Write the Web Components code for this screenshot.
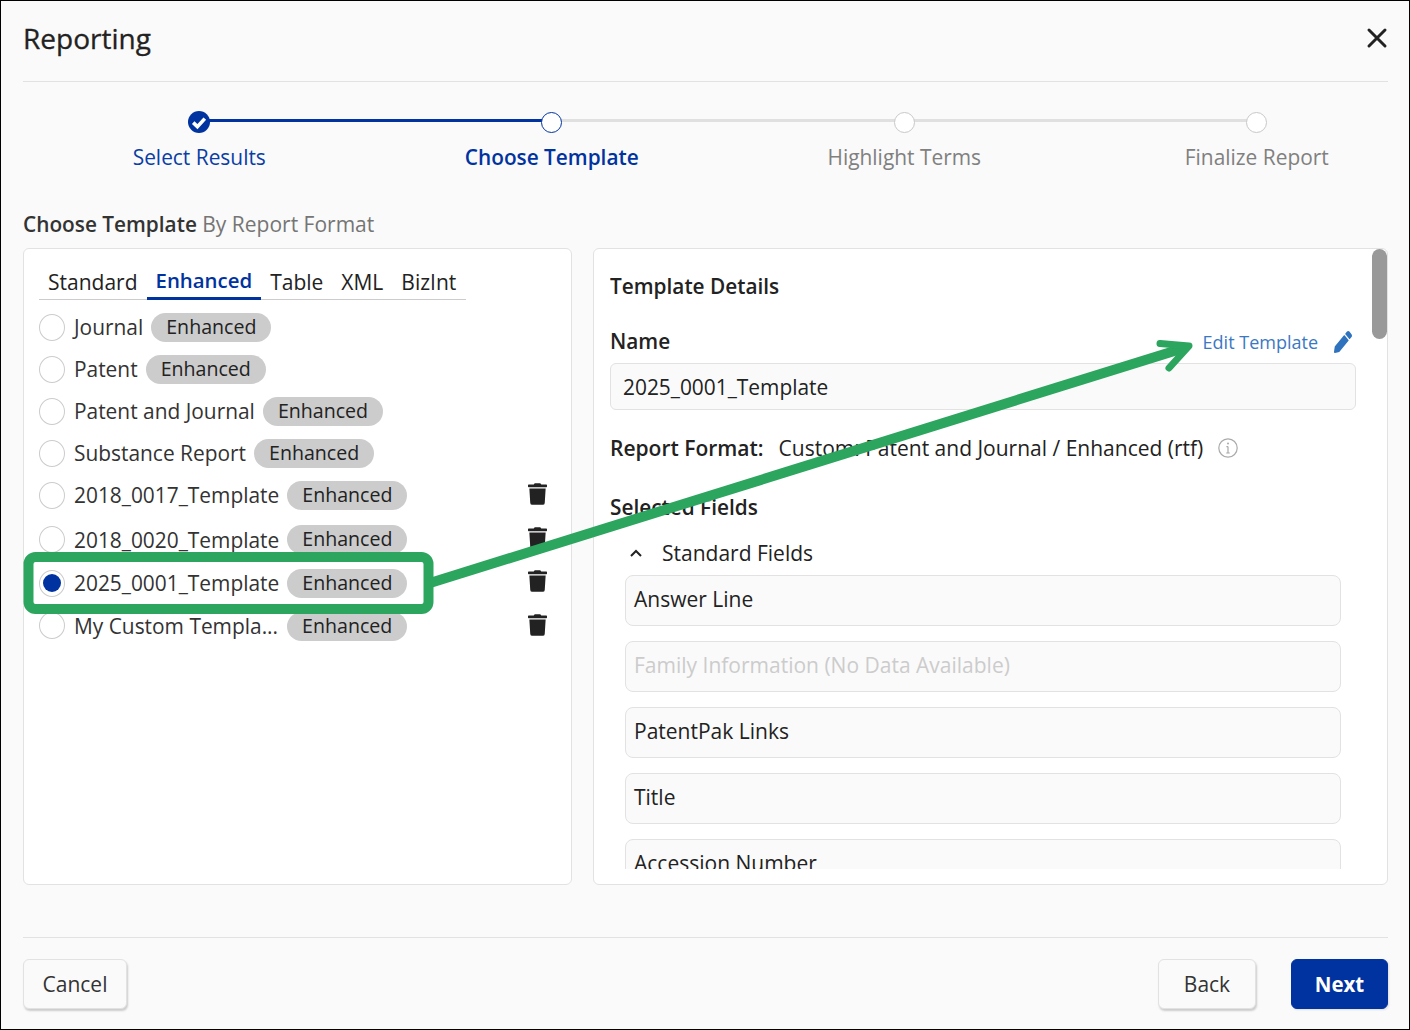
<!DOCTYPE html>
<html>
<head>
<meta charset="utf-8">
<title>Reporting</title>
<style>
  html, body { margin: 0; padding: 0; }
  body { font-family: "Open Sans", sans-serif; color: #222; font-size: 21px; }
</style>
</head>
<body>
<report-dialog>
  <step-bar slot="steps">
    <step-item state="done" label="Select Results"></step-item>
    <step-item state="current" label="Choose Template"></step-item>
    <step-item label="Highlight Terms"></step-item>
    <step-item label="Finalize Report" last></step-item>
  </step-bar>
  <template-panel slot="left">
    <template-row name="Journal"></template-row>
    <template-row name="Patent"></template-row>
    <template-row name="Patent and Journal"></template-row>
    <template-row name="Substance Report"></template-row>
    <template-row name="2018_0017_Template" custom style="height:42px;margin-bottom:1px"></template-row>
    <template-row name="2018_0020_Template" custom style="height:45px"></template-row>
    <template-row name="2025_0001_Template" custom checked style="--ty:-5px"></template-row>
    <template-row name="My Custom Templa..." custom style="height:43px;--ty:-1px;--pill-top:2px;--pill-left:9px"></template-row>
  </template-panel>
  <details-panel slot="right">
    <field-row>Answer Line</field-row>
    <field-row disabled>Family Information (No Data Available)</field-row>
    <field-row>PatentPak Links</field-row>
    <field-row>Title</field-row>
    <field-row>Accession Number</field-row>
  </details-panel>
</report-dialog>

<script>
const TRASH = '<svg viewBox="0 0 448 512" width="19" height="22" fill="#222"><path d="M432 32H312l-9.4-18.7A24 24 0 0 0 281.1 0H166.8a23.72 23.72 0 0 0-21.4 13.3L136 32H16A16 16 0 0 0 0 48v32a16 16 0 0 0 16 16h416a16 16 0 0 0 16-16V48a16 16 0 0 0-16-16zM53.2 467a48 48 0 0 0 47.9 45h245.8a48 48 0 0 0 47.9-45L416 128H32z"/></svg>';
const PENCIL = '<svg viewBox="0 0 512 512" width="18" height="22" preserveAspectRatio="none" fill="#2f72bd"><path d="M497.9 142.1l-46.1 46.1c-4.7 4.7-12.3 4.7-17 0l-111-111c-4.7-4.7-4.7-12.3 0-17l46.1-46.1c18.7-18.7 49.1-18.7 67.9 0l60.1 60.1c18.8 18.7 18.8 49.1 0 67.9zM284.2 99.8L21.6 362.4.4 483.9c-2.9 16.4 11.4 30.6 27.8 27.8l121.5-21.3 262.6-262.6c4.7-4.7 4.7-12.3 0-17l-111-111c-4.8-4.7-12.4-4.7-17.1 0z"/></svg>';

class ReportDialog extends HTMLElement {
  constructor() {
    super();
    this.attachShadow({mode: "open"}).innerHTML = `
      <style>
        * { box-sizing: border-box; }
        :host {
          display: block; position: relative; width: 1410px; height: 1030px; overflow: hidden;
          box-sizing: border-box; border: 1px solid #000; background: #fafafa; padding: 0 21px 0 22px;
        }
        header {
          height: 81px; border-bottom: 1px solid #e2e2e2; display: flex; align-items: center;
          justify-content: space-between; padding-bottom: 6px;
        }
        h1 { margin: 0; font-size: 28px; font-weight: 500; color: #222; -webkit-text-stroke: 0.3px #222; }
        .close { display: flex; }
        .steps { display: block; height: 106px; }
        h2 { margin: 0; height: 60px; padding-top: 22px; font-size: 20.8px; line-height: 28px; font-weight: 600; color: #333; }
        h2 span { font-weight: 400; font-size: 21px; color: #757575; }
        .panels { display: flex; gap: 21px; height: 637px; }
        footer {
          margin-top: 52px; border-top: 1px solid #e2e2e2; padding-top: 21px;
          display: flex; align-items: flex-start;
        }
        .spacer { flex: 1; }
        .back { margin-right: 35px; }
        .overlay { position: absolute; left: -1px; top: -1px; pointer-events: none; }
      </style>
      <header>
        <h1>Reporting</h1>
        <span class="close">
          <svg width="22" height="22" viewBox="0 0 22 22"><path d="M3 3 L19 19 M19 3 L3 19" stroke="#222" stroke-width="3" stroke-linecap="round"/></svg>
        </span>
      </header>
      <div class="steps"><slot name="steps"></slot></div>
      <h2>Choose Template <span>By Report Format</span></h2>
      <div class="panels">
        <slot name="left"></slot>
        <slot name="right"></slot>
      </div>
      <footer>
        <app-button style="width:104px">Cancel</app-button>
        <div class="spacer"></div>
        <app-button class="back" style="width:98px">Back</app-button>
        <app-button primary style="width:97px">Next</app-button>
      </footer>
      <svg class="overlay" width="1410" height="1030" fill="none" stroke="#2ca55e">
        <rect x="28.5" y="557" width="400" height="52" rx="7" stroke-width="10"/>
        <path d="M430 583 L1184 348" stroke-width="10"/>
        <path d="M1160 343.5 L1189 346 L1169 368" stroke-width="7" stroke-linecap="round" stroke-linejoin="round"/>
      </svg>`;
  }
}
customElements.define("report-dialog", ReportDialog);

class StepBar extends HTMLElement {
  constructor() {
    super();
    this.attachShadow({mode: "open"}).innerHTML = `
      <style>
        :host { display: grid; grid-template-columns: repeat(4, 352.5px); padding-top: 29px; }
      </style>
      <slot></slot>`;
  }
}
customElements.define("step-bar", StepBar);

class StepItem extends HTMLElement {
  constructor() {
    super();
    const state = this.getAttribute("state") || "todo";
    const mark = state == "done"
      ? '<svg width="22" height="22" viewBox="0 0 22 22"><circle cx="11" cy="11" r="11" fill="#0033a0"/><path d="M5.2 11.6 L9.4 15.6 L16.8 7.6" fill="none" stroke="#fff" stroke-width="3.6"/></svg>'
      : '<span class="ring"></span>';
    this.attachShadow({mode: "open"}).innerHTML = `
      <style>
        * { box-sizing: border-box; }
        :host { display: block; position: relative; text-align: center; font-size: 20.9px; color: #808080; }
        :host([state="done"]) { color: #0a3ea6; }
        :host([state="current"]) { color: #0033a0; font-weight: 600; font-size: 20.8px; }
        .dot { height: 22px; position: relative; z-index: 1; display: flex; justify-content: center; align-items: center; }
        .ring { width: 21px; height: 21px; border-radius: 50%; background: #fff; border: 1px solid #c8c8c8; }
        :host([state="current"]) .ring { border-color: #0033a0; }
        .line {
          position: absolute; left: 50%; width: 100%; top: 8px; height: 3px; background: #e0e0e0;
        }
        :host([state="done"]) .line { background: #0033a0; }
        :host([last]) .line { display: none; }
        .label { margin-top: 10px; line-height: 28px; }
      </style>
      <div class="line"></div>
      <div class="dot">${mark}</div>
      <div class="label">${this.getAttribute("label")}</div>`;
  }
}
customElements.define("step-item", StepItem);

class TemplatePanel extends HTMLElement {
  constructor() {
    super();
    this.attachShadow({mode: "open"}).innerHTML = `
      <style>
        * { box-sizing: border-box; }
        :host {
          display: block; box-sizing: border-box; width: 549px; height: 637px; background: #fff; border: 1px solid #e2e2e2;
          border-radius: 6px; padding: 15px 15px 0 15px; font-size: 20.9px;
        }
        .tabs { display: flex; width: 427px; height: 36px; border-bottom: 1px solid #ccc; color: #222; font-size: 21px; }
        .tab { padding: 4px 9px 0; line-height: 28px; height: 36px; }
        .tab.on { color: #0033a0; font-weight: 600; font-size: 20.4px; border-bottom: 3px solid #0033a0; padding-top: 2px; }
        .list { margin-top: 6px; }
      </style>
      <div class="tabs">
        <span class="tab">Standard</span>
        <span class="tab on">Enhanced</span>
        <span class="tab">Table</span>
        <span class="tab">XML</span>
        <span class="tab">BizInt</span>
      </div>
      <div class="list"><slot></slot></div>`;
  }
}
customElements.define("template-panel", TemplatePanel);

class TemplateRow extends HTMLElement {
  constructor() {
    super();
    const trash = this.hasAttribute("custom") ? `<span class="trash">${TRASH}</span>` : "";
    this.attachShadow({mode: "open"}).innerHTML = `
      <style>
        * { box-sizing: border-box; }
        :host { display: flex; align-items: center; height: 42px; width: 517px; }
        .radio {
          width: 26px; height: 27px; border-radius: 50%; border: 1px solid #ccc; background: #fff;
          display: flex; align-items: center; justify-content: center; flex: none;
        }
        :host([checked]) .radio::after { content: ""; width: 18px; height: 18px; border-radius: 50%; background: #0033a0; }
        .name { margin-left: 9px; white-space: nowrap; color: #333; }
        .pill {
          margin-left: var(--pill-left, 8px); margin-top: var(--pill-top, 0); height: 29px; line-height: 27px;
          padding: 0 15px; border-radius: 15px; font-size: 19.6px;
          background: #ccc; color: #222; white-space: nowrap;
        }
        .trash { margin-left: auto; display: flex; margin-top: var(--ty, -3px); padding-right: 9px; }
      </style>
      <span class="radio"></span>
      <span class="name">${this.getAttribute("name")}</span>
      <span class="pill">Enhanced</span>
      ${trash}`;
  }
}
customElements.define("template-row", TemplateRow);

class DetailsPanel extends HTMLElement {
  constructor() {
    super();
    this.attachShadow({mode: "open"}).innerHTML = `
      <style>
        * { box-sizing: border-box; }
        :host {
          display: block; box-sizing: border-box; position: relative; width: 795px; height: 637px; background: #fff;
          border: 1px solid #e2e2e2; border-radius: 6px; padding: 0 0 15px 16px; font-size: 21px; color: #222;
        }
        .scroll { height: 620px; overflow: hidden; }
        h3 { margin: 0; font-size: 20.8px; font-weight: 600; line-height: 28px; color: #222; }
        .title { padding-top: 23px; height: 65px; }
        .name { height: 49px; display: flex; justify-content: space-between; width: 746px; padding-top: 13px; }
        .edit { display: flex; gap: 16px; font-size: 18px; color: #3b78c4; line-height: 28px; padding-right: 4px; padding-top: 1px; }
        .edit svg { display: block; margin-top: 3px; }
        .input {
          width: 746px; height: 47px; background: #fafafa; border: 1px solid #e2e2e2; border-radius: 6px;
          padding: 0 12px; line-height: 47px; font-size: 20.9px;
        }
        .format { margin-top: 24px; height: 28px; display: flex; align-items: center; line-height: 28px; white-space: nowrap; }
        .format b { font-weight: 600; margin-right: 15px; }
        .format svg { margin-left: 15px; }
        .selected { margin-top: 31px; }
        .group { margin-top: 18px; height: 28px; display: flex; align-items: center; padding-left: 20px; line-height: 28px; }
        .group svg { margin-right: 20px; }
        .fields { margin-top: 8px; padding-left: 15px; width: 731px; }
        .thumb { position: absolute; right: 0; top: 0; width: 15px; height: 90px; border-radius: 8px; background: #999; }
      </style>
      <div class="scroll">
        <h3 class="title">Template Details</h3>
        <div class="name">
          <h3>Name</h3>
          <span class="edit">Edit Template ${PENCIL}</span>
        </div>
        <div class="input">2025_0001_Template</div>
        <div class="format">
          <b>Report Format:</b> Custom: Patent and Journal / Enhanced (rtf)
          <svg width="20" height="20" viewBox="0 0 20 20"><circle cx="10" cy="10" r="9.2" fill="none" stroke="#aaa" stroke-width="1.2"/><path d="M10 8.5 V15 M8.2 15 H11.8 M8.4 8.6 H10" fill="none" stroke="#aaa" stroke-width="1.2"/><circle cx="10" cy="5.6" r="1" fill="#aaa"/></svg>
        </div>
        <h3 class="selected">Selected Fields</h3>
        <div class="group">
          <svg width="12" height="8" viewBox="0 0 12 8"><path d="M1 7 L6 2 L11 7" fill="none" stroke="#222" stroke-width="2"/></svg>
          Standard Fields
        </div>
        <div class="fields"><slot></slot></div>
      </div>
      <div class="thumb"></div>`;
  }
}
customElements.define("details-panel", DetailsPanel);

class FieldRow extends HTMLElement {
  constructor() {
    super();
    this.attachShadow({mode: "open"}).innerHTML = `
      <style>
        :host {
          display: block; box-sizing: border-box; height: 51px; margin-bottom: 15px; padding: 0 8px;
          line-height: 47px; background: #fafafa; border: 1px solid #e2e2e2; border-radius: 8px; color: #222;
        }
        :host([disabled]) { color: #ccc; }
      </style>
      <slot></slot>`;
  }
}
customElements.define("field-row", FieldRow);

class AppButton extends HTMLElement {
  constructor() {
    super();
    this.attachShadow({mode: "open"}).innerHTML = `
      <style>
        :host {
          display: flex; align-items: center; justify-content: center; box-sizing: border-box; height: 50px;
          background: #fafafa; border: 1px solid #e2e2e2; border-radius: 6px; color: #333; font-size: 21px;
          box-shadow: 1px 2px 2px #ccc;
        }
        :host([primary]) { background: #0033a0; border-color: #0033a0; color: #fff; font-weight: 700; font-size: 20.5px; box-shadow: 1px 1px 2px #ddd; }
      </style>
      <slot></slot>`;
  }
}
customElements.define("app-button", AppButton);
</script>
</body>
</html>
